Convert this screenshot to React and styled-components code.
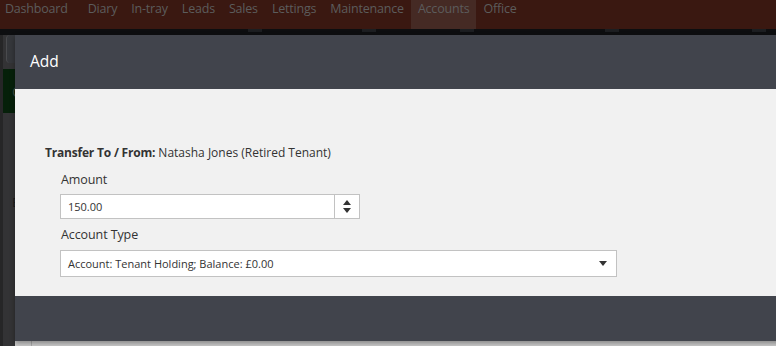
import React from "react";
import styled, { createGlobalStyle, css } from "styled-components";

const GlobalStyle = createGlobalStyle`
  html, body {
    margin: 0;
    padding: 0;
    background: #2f3032;
    overflow: hidden;
  }
  * {
    box-sizing: border-box;
  }
`;

// styles
const Page = styled.div`
  width: 776px;
  height: 346px;
  display: flex;
  flex-direction: column;
  font-family: "Open Sans", "Noto Sans", sans-serif;
  overflow: hidden;
`;

const NavBar = styled.nav`
  height: 29px;
  flex: none;
  display: flex;
  align-items: stretch;
  padding-left: 0;
  background: #3a1811;
`;

const NavItem = styled.div`
  display: flex;
  align-items: flex-start;
  padding: 1px 7px 0;
  font-size: 12.5px;
  line-height: 16px;
  color: #5c5c5c;
  letter-spacing: -0.2px;
  ${(p) =>
    p.$wide &&
    css`
      padding-left: 5px;
      margin-right: 6px;
    `}
  ${(p) =>
    p.$active &&
    css`
      background: #452a24;
    `}
`;

const TabStrip = styled.div`
  height: 6px;
  flex: none;
  display: flex;
  background: #0d0e10;
`;

const TabMark = styled.span`
  width: 14px;
  height: 3px;
  margin-left: ${(p) => p.$left}px;
  background: #1c1e21;
`;

const Stage = styled.div`
  flex: 1;
  position: relative;
  display: flex;
  background: #c9c9c9;
`;

const Sidebar = styled.div`
  width: 15px;
  flex: none;
  display: flex;
  flex-direction: column;
  background: #333335;
  border-left: 3px solid #262627;
`;

const Chip = styled.div`
  height: 28px;
  margin: 0 0 6px 3px;
  border-radius: 4px 0 0 4px;
  background: #35373b;
  border-left: 1px solid #4a4b4e;
`;

const GreenBlock = styled.div`
  height: 44px;
  display: flex;
  align-items: center;
  padding-left: 9px;
  background: #06200a;
  color: #3e4a3e;
  font-size: 14px;
`;

const GreyBlock = styled.div`
  flex: 1;
  padding: 80px 0 0 9px;
  color: #1d1d1d;
  font-size: 13px;
`;

const Backdrop = styled.div`
  flex: 1;
  border-left: 1px solid #a9a9a9;
  margin-left: 16px;
`;

const Modal = styled.div`
  position: absolute;
  top: 0;
  left: 15px;
  width: 790px;
  display: flex;
  flex-direction: column;
  box-shadow: 0 2px 5px rgba(0, 0, 0, 0.35);
`;

const Header = styled.div`
  height: 54px;
  display: flex;
  align-items: center;
  padding: 0 15px 2px;
  background: #41444c;
  color: #ffffff;
  font-size: 15.5px;
`;

const Body = styled.div`
  height: 207px;
  display: flex;
  flex-direction: column;
  padding: 55px 30px 0;
  background: #f1f1f1;
  color: #333333;
  font-size: 12px;
`;

const Footer = styled.div`
  height: 45px;
  background: #41444c;
`;

const TransferLine = styled.div`
  line-height: 17px;
  b {
    font-weight: 700;
    letter-spacing: -0.2px;
  }
`;

const Field = styled.div`
  display: flex;
  flex-direction: column;
  margin: ${(p) => p.$top}px 0 0 15px;
`;

const Label = styled.label`
  font-size: 12.5px;
  line-height: 17px;
  letter-spacing: -0.1px;
  margin: 0 0 ${(p) => p.$gap}px 1px;
`;

const Box = styled.div`
  width: ${(p) => p.$w}px;
  height: ${(p) => p.$h}px;
  display: flex;
  align-items: center;
  background: #ffffff;
  border: 1px solid #c2c2c2;
  font-size: 11px;
  color: #333333;
`;

const BoxText = styled.span`
  flex: 1;
  padding-left: 7px;
`;

const Spinner = styled.div`
  width: 25px;
  align-self: stretch;
  display: flex;
  flex-direction: column;
  align-items: center;
  justify-content: center;
  gap: 3px;
  border-left: 1px solid #c2c2c2;
`;

const Caret = styled.svg`
  width: 8px;
  height: 5px;
  fill: #333333;
  margin-right: ${(p) => p.$mr || 0}px;
`;
// end styles

const navItems = [
  "Dashboard",
  "Diary",
  "In-tray",
  "Leads",
  "Sales",
  "Lettings",
  "Maintenance",
  "Accounts",
  "Office",
];

const Up = () => (
  <Caret viewBox="0 0 8 5">
    <path d="M4 0 L8 5 L0 5 Z" />
  </Caret>
);

const Down = ({ mr }) => (
  <Caret viewBox="0 0 8 5" $mr={mr}>
    <path d="M0 0 L8 0 L4 5 Z" />
  </Caret>
);

const App = () => {
  return (
    <Page>
      <GlobalStyle />
      <NavBar>
        {navItems.map((item) => (
          <NavItem
            key={item}
            $wide={item === "Dashboard"}
            $active={item === "Accounts"}
          >
            {item}
          </NavItem>
        ))}
      </NavBar>
      <TabStrip>
        <TabMark $left={248} />
        <TabMark $left={100} />
        <TabMark $left={84} />
        <TabMark $left={131} />
        <TabMark $left={133} />
      </TabStrip>
      <Stage>
        <Sidebar>
          <Chip />
          <GreenBlock>C</GreenBlock>
          <GreyBlock>E</GreyBlock>
        </Sidebar>
        <Backdrop />
        <Modal>
          <Header>Add</Header>
          <Body>
            <TransferLine>
              <b>Transfer To / From:</b> Natasha Jones (Retired Tenant)
            </TransferLine>
            <Field $top={10}>
              <Label $gap={6}>Amount</Label>
              <Box $w={300} $h={25}>
                <BoxText>150.00</BoxText>
                <Spinner>
                  <Up />
                  <Down />
                </Spinner>
              </Box>
            </Field>
            <Field $top={7}>
              <Label $gap={7}>Account Type</Label>
              <Box $w={557} $h={27}>
                <BoxText>Account: Tenant Holding; Balance: £0.00</BoxText>
                <Down mr={9} />
              </Box>
            </Field>
          </Body>
          <Footer />
        </Modal>
      </Stage>
    </Page>
  );
};

export default App;
